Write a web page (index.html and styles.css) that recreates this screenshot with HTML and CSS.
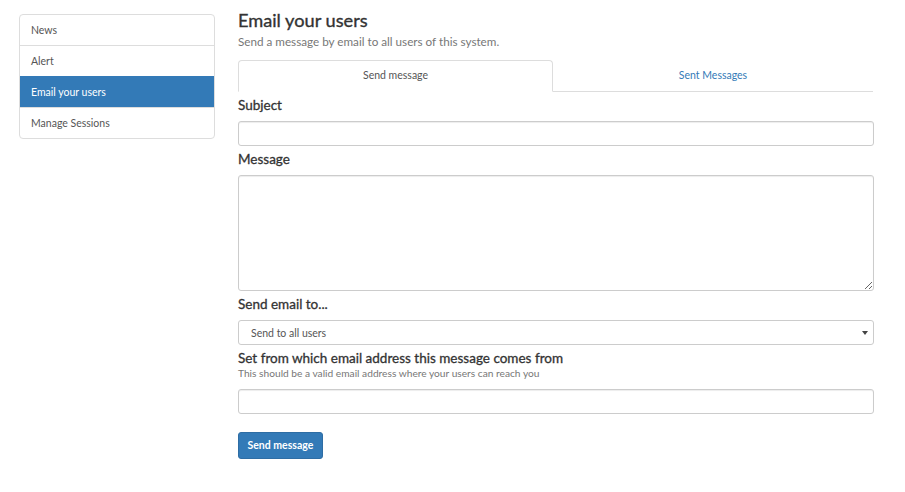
FILE: index.html
```html
<!DOCTYPE html>
<html>
<head>
<meta charset="utf-8">
<link rel="stylesheet" href="styles.css">
</head>
<body>
<div class="page">
  <nav class="sidebar">
    <a class="item">News</a>
    <a class="item">Alert</a>
    <a class="item active">Email your users</a>
    <a class="item">Manage Sessions</a>
  </nav>
  <main class="main">
    <h1 class="title">Email your users</h1>
    <p class="subtitle">Send a message by email to all users of this system.</p>
    <div class="tabs">
      <div class="tab active">Send message</div>
      <div class="tab">Sent Messages</div>
    </div>
    <form class="form">
      <div class="group first">
        <label class="label">Subject</label>
        <input class="control" type="text">
      </div>
      <div class="group">
        <label class="label">Message</label>
        <textarea class="control area"></textarea>
      </div>
      <div class="group">
        <label class="label">Send email to...</label>
        <div class="select-wrap">
          <select class="control select"><option>Send to all users</option></select>
        </div>
      </div>
      <div class="group">
        <label class="label">Set from which email address this message comes from</label>
        <div class="help">This should be a valid email address where your users can reach you</div>
        <input class="control" type="text">
      </div>
      <button class="btn" type="button">Send message</button>
    </form>
  </main>
</div>
</body>
</html>
```

FILE: styles.css
```css
html, body {
  margin: 0;
  padding: 0;
  background: #fff;
  font-family: Lato, "Open Sans", "Liberation Sans", sans-serif;
  color: #333;
}
.page {
  display: flex;
  gap: 23px;
  padding: 9px 19px;
  align-items: flex-start;
}
.sidebar {
  box-sizing: border-box;
  width: 196px;
  flex: 0 0 196px;
  margin-top: 5px;
  border: 1px solid #ddd;
  border-radius: 4px;
  overflow: hidden;
  display: flex;
  flex-direction: column;
}
.item {
  display: block;
  font-size: 10.5px;
  line-height: 15px;
  padding: 8px 11px 7px;
  color: #555;
  border-top: 1px solid #ddd;
}
.item:first-child { border-top: none; }
.item.active {
  background: #337ab7;
  color: #fff;
  border-top-color: #337ab7;
}
.main {
  width: 636px;
}
.title {
  margin: 0;
  font-size: 18.2px;
  line-height: 22px;
  font-weight: 400;
  -webkit-text-stroke: 0.35px #333;
  color: #333;
}
.subtitle {
  margin: 2px 0 0;
  font-size: 11.7px;
  line-height: 16px;
  color: #777;
}
.tabs {
  display: flex;
  margin-top: 11px;
  border-bottom: 1px solid #ddd;
  margin-right: 1px;
}
.tab {
  flex: 1;
  text-align: center;
  font-size: 10.5px;
  line-height: 15px;
  padding: 7px 0 8px;
  color: #337ab7;
  border: 1px solid transparent;
  border-radius: 4px 4px 0 0;
  margin-bottom: -1px;
}
.tab.active {
  flex: 0 0 313px;
  color: #555;
  border-color: #ddd;
  border-bottom-color: #fff;
  background: #fff;
}
.form {
  display: flex;
  flex-direction: column;
}
.group {
  display: flex;
  flex-direction: column;
  margin-top: 4px;
}
.group.first { margin-top: 4px; }
.label {
  font-size: 13.5px;
  line-height: 18px;
  font-weight: 400;
  -webkit-text-stroke: 0.3px #333;
  color: #333;
  margin-bottom: 7px;
}
.control {
  box-sizing: border-box;
  display: block;
  width: 100%;
  height: 25px;
  margin: 0;
  border: 1px solid #ccc;
  border-radius: 3px;
  box-shadow: inset 0 1px 1px rgba(0,0,0,.075);
  font-family: inherit;
  font-size: 10.5px;
  color: #555;
  background: #fff;
  padding: 3px 12px;
}
.area {
  height: 116px;
  resize: vertical;
}
.select-wrap {
  position: relative;
}
.select {
  appearance: none;
  -webkit-appearance: none;
  box-shadow: none;
  padding: 2px 12px;
}
.select-wrap::after {
  content: "";
  position: absolute;
  right: 6px;
  top: 11px;
  border-left: 3px solid transparent;
  border-right: 3px solid transparent;
  border-top: 4px solid #444;
}
.label + .help { margin-top: -7px; }
.help {
  font-size: 10.2px;
  line-height: 12px;
  color: #777;
  margin-bottom: 10px;
}
.btn {
  align-self: flex-start;
  margin-top: 18px;
  height: 27px;
  padding: 0 8.5px 2px;
  font-family: inherit;
  font-size: 10.5px;
  font-weight: 700;
  color: #fff;
  background: #337ab7;
  border: 1px solid #2e6da4;
  border-radius: 3px;
}
```
